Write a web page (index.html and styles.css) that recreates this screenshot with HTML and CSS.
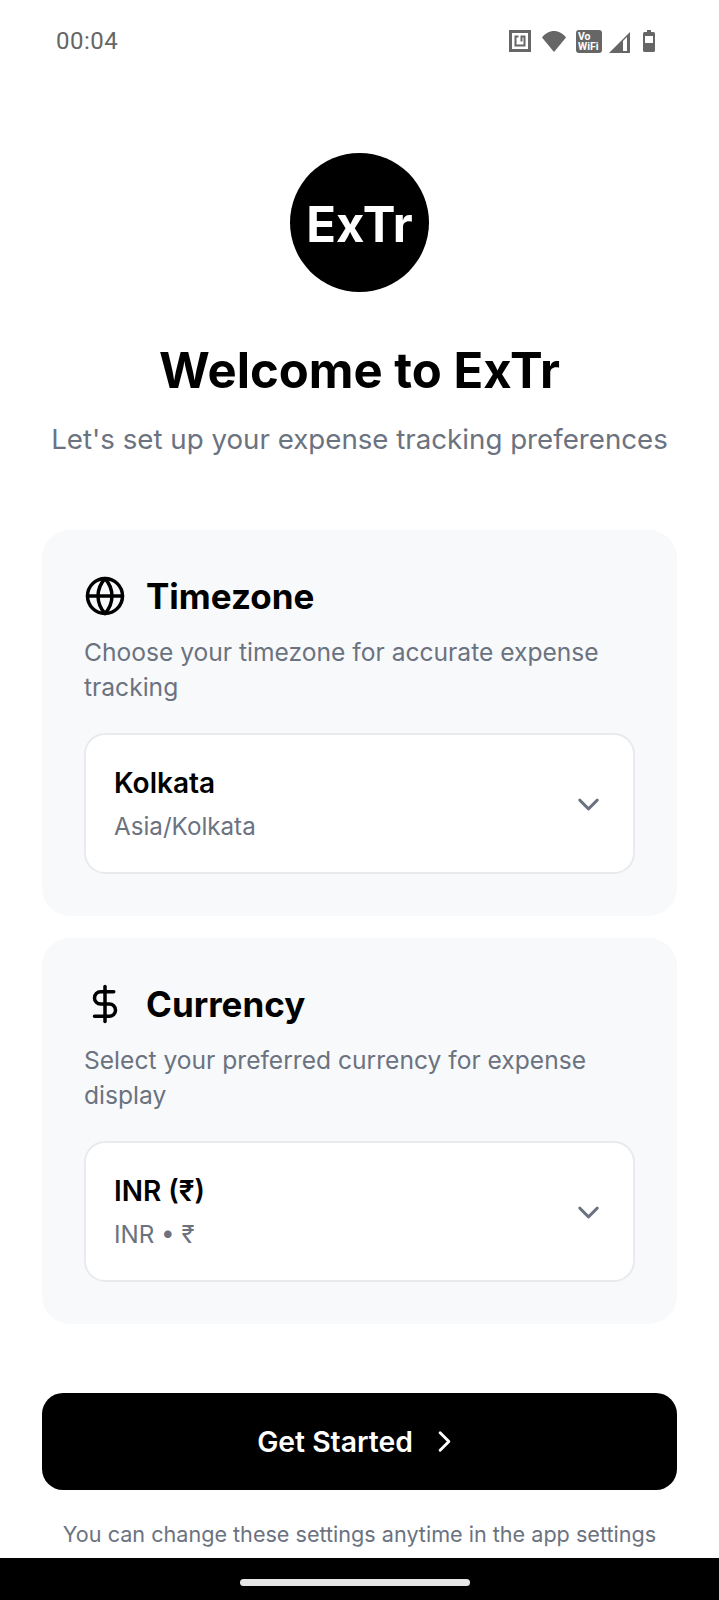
FILE: index.html
```html
<!DOCTYPE html>
<html lang="en">
<head>
    <meta charset="UTF-8">
    <meta name="viewport" content="width=device-width, initial-scale=1.0">
    <title>ExTr</title>
    <link rel="stylesheet" href="styles.css">
</head>
<body>
    <div class="screen">
        <!-- status bar -->
        <div class="status-bar">
            <span class="status-time">00:04</span>
            <div class="status-icons">
                <svg class="icon-nfc" width="22" height="22" viewBox="0 0 22 22" fill="none" stroke="#666"><rect x="1.500" y="1.500" width="19" height="19" stroke-width="3"/><path d="M9.500 6.500h-3v9h9v-9h-3v5" stroke-width="2"/></svg>
                <svg class="icon-wifi" width="24" height="21" viewBox="0 0 24 21"><path fill="#666" d="M12 21 0 6.500C3 2.500 7.500 0 12 0s9 2.500 12 6.500z"/></svg>
                <div class="vowifi"><span>Vo</span><span>WiFi</span></div>
                <svg class="icon-signal" width="21" height="23" viewBox="0 0 21 23"><path fill="#666" fill-rule="evenodd" d="M0 23 21 2v21zM14 21h4V7l-4 4z"/></svg>
                <svg class="icon-battery" width="12" height="22" viewBox="0 0 12 22"><path fill="#666" fill-rule="evenodd" d="M4 0h4v2h2.500q1.500 0 1.500 1.500v17q0 1.500-1.500 1.500h-9Q0 22 0 20.500v-17Q0 2 1.500 2H4zM2 6v7h8V6z"/></svg>
            </div>
        </div>

        <div class="content">
            <div class="logo">ExTr</div>
            <h1 class="title">Welcome to ExTr</h1>
            <p class="subtitle">Let's set up your expense tracking preferences</p>

            <!-- timezone -->
            <section class="card">
                <div class="card-head">
                    <svg class="card-icon" viewBox="0 0 24 24" fill="none" stroke="#000" stroke-width="2" stroke-linecap="round" stroke-linejoin="round">
                        <circle cx="12" cy="12" r="10"/>
                        <path d="M2 12h20"/>
                        <path d="M12 2a15.300 15.300 0 0 1 4 10 15.300 15.300 0 0 1-4 10 15.300 15.300 0 0 1-4-10 15.300 15.300 0 0 1 4-10z"/>
                    </svg>
                    <h2>Timezone</h2>
                </div>
                <p class="card-desc">Choose your timezone for accurate expense tracking</p>
                <div class="select-box">
                    <div>
                        <div class="select-name">Kolkata</div>
                        <div class="select-sub">Asia/Kolkata</div>
                    </div>
                    <svg class="chevron" viewBox="0 0 24 24" fill="none" stroke="#6b7280" stroke-width="2" stroke-linecap="round" stroke-linejoin="round"><path d="m6 9 6 6 6-6"/></svg>
                </div>
            </section>

            <!-- currency -->
            <section class="card">
                <div class="card-head">
                    <svg class="card-icon" viewBox="0 0 24 24" fill="none" stroke="#000" stroke-width="2" stroke-linecap="round" stroke-linejoin="round">
                        <path d="M12 2v20"/>
                        <path d="M17 5H9.500a3.500 3.500 0 0 0 0 7h5a3.500 3.500 0 0 1 0 7H6"/>
                    </svg>
                    <h2>Currency</h2>
                </div>
                <p class="card-desc">Select your preferred currency for expense display</p>
                <div class="select-box">
                    <div>
                        <div class="select-name">INR (₹)</div>
                        <div class="select-sub">INR • ₹</div>
                    </div>
                    <svg class="chevron" viewBox="0 0 24 24" fill="none" stroke="#6b7280" stroke-width="2" stroke-linecap="round" stroke-linejoin="round"><path d="m6 9 6 6 6-6"/></svg>
                </div>
            </section>

            <button class="primary-button">
                <span>Get Started</span>
                <svg class="button-arrow" viewBox="0 0 24 24" fill="none" stroke="#fff" stroke-width="2" stroke-linecap="round" stroke-linejoin="round"><path d="m9 18 6-6-6-6"/></svg>
            </button>
            <p class="footnote">You can change these settings anytime in the app settings</p>
        </div>

        <!-- gesture bar -->
        <div class="nav-bar"><div class="nav-pill"></div></div>
    </div>
</body>
</html>
```

FILE: styles.css
```css
* {
    margin: 0;
    padding: 0;
    box-sizing: border-box;
}

html, body {
    height: 1600px;
    overflow: hidden;
}

body {
    font-family: Inter, "Noto Sans", sans-serif;
    background: #fff;
    color: #000;
}

.screen {
    height: 1600px;
    display: flex;
    flex-direction: column;
}

/* status bar */
.status-bar {
    height: 82px;
    flex: none;
    display: flex;
    justify-content: space-between;
    align-items: center;
    padding: 0 64px 0 56px;
}

.status-time {
    font-family: Roboto, sans-serif;
    font-size: 24px;
    color: #666;
    letter-spacing: 0.5px;
}

.status-icons {
    display: flex;
    align-items: center;
}

.icon-wifi {
    margin-left: 11px;
}

.icon-signal {
    margin-left: 7px;
}

.icon-battery {
    margin-left: 13px;
}

.vowifi {
    width: 26px;
    height: 23px;
    margin-left: 10px;
    border-radius: 3px;
    background: #666;
    color: #fff;
    font-family: Roboto, sans-serif;
    font-size: 10.500px;
    font-weight: 700;
    line-height: 10px;
    padding: 2px 0 0 2px;
    display: flex;
    flex-direction: column;
}

/* main content */
.content {
    flex: 1;
    display: flex;
    flex-direction: column;
    align-items: center;
    padding: 71px 42px 0;
}

.logo {
    width: 139px;
    height: 139px;
    flex: none;
    padding-top: 4px;
    border-radius: 50%;
    background: #000;
    color: #fff;
    font-size: 49px;
    font-weight: 700;
    display: flex;
    align-items: center;
    justify-content: center;
}

.title {
    margin-top: 49px;
    font-size: 49px;
    line-height: 60px;
    font-weight: 700;
}

.subtitle {
    margin-top: 21px;
    font-size: 27.700px;
    line-height: 34px;
    color: #6b7280;
    text-align: center;
    white-space: nowrap;
}

.card {
    width: 100%;
    background: #f8f9fa;
    border-radius: 28px;
    padding: 45px 42px 42px;
    margin-top: 22px;
}

.subtitle + .card {
    margin-top: 74px;
}

.card-head {
    display: flex;
    align-items: center;
    gap: 20px;
    height: 42px;
}

.card-icon {
    width: 42px;
    height: 42px;
    flex: none;
}

.card h2 {
    font-size: 35px;
    font-weight: 700;
    line-height: 42px;
}

.card-desc {
    margin-top: 18px;
    font-size: 24.600px;
    line-height: 35px;
    color: #6b7280;
}

.select-box {
    margin-top: 28px;
    height: 141px;
    background: #fff;
    border: 2px solid #e8eaed;
    border-radius: 21px;
    padding: 1px 27px 0 28px;
    display: flex;
    align-items: center;
    justify-content: space-between;
}

.select-name {
    font-size: 28px;
    font-weight: 600;
    line-height: 34px;
}

.select-sub {
    margin-top: 12px;
    font-size: 24.200px;
    line-height: 30px;
    color: #6b7280;
}

.chevron {
    width: 35px;
    height: 35px;
    flex: none;
}

.primary-button {
    width: 100%;
    height: 97px;
    flex: none;
    margin-top: 69px;
    background: #000;
    color: #fff;
    border: none;
    border-radius: 21px;
    font-family: inherit;
    font-size: 28.300px;
    font-weight: 600;
    display: flex;
    align-items: center;
    justify-content: center;
    gap: 14px;
}

.button-arrow {
    width: 35px;
    height: 35px;
}

.footnote {
    margin-top: 29px;
    font-size: 21.600px;
    line-height: 30px;
    color: #6b7280;
    white-space: nowrap;
}

/* gesture bar */
.nav-bar {
    height: 42px;
    flex: none;
    background: #000;
    display: flex;
    justify-content: center;
    padding: 21px 10px 0 0;
}

.nav-pill {
    width: 230px;
    height: 7px;
    border-radius: 4px;
    background: #e6e6e6;
}
```
